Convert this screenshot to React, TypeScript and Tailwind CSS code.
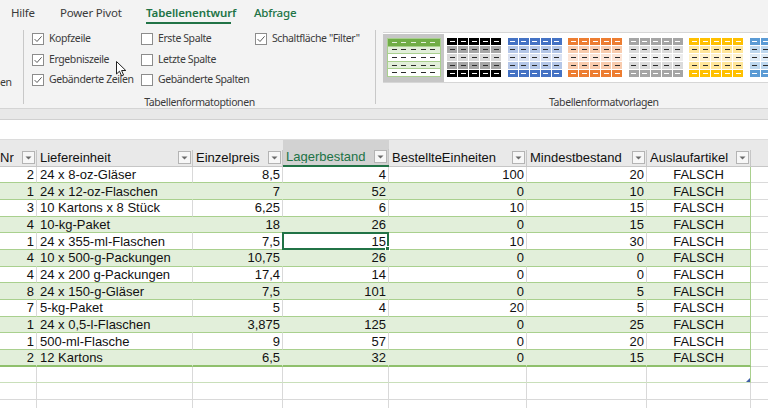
import React from 'react';

type Row = [string, string, string, string, string, string];
const rows: Row[] = [
  ['2', '24 x 8-oz-Gläser', '8,5', '4', '100', '20'],
  ['1', '24 x 12-oz-Flaschen', '7', '52', '0', '10'],
  ['3', '10 Kartons x 8 Stück', '6,25', '6', '10', '15'],
  ['4', '10-kg-Paket', '18', '26', '0', '15'],
  ['1', '24 x 355-ml-Flaschen', '7,5', '15', '10', '30'],
  ['4', '10 x 500-g-Packungen', '10,75', '26', '0', '0'],
  ['4', '24 x 200 g-Packungen', '17,4', '14', '0', '0'],
  ['8', '24 x 150-g-Gläser', '7,5', '101', '0', '5'],
  ['7', '5-kg-Paket', '5', '4', '20', '5'],
  ['1', '24 x 0,5-l-Flaschen', '3,875', '125', '0', '25'],
  ['1', '500-ml-Flasche', '9', '57', '0', '20'],
  ['2', '12 Kartons', '6,5', '32', '0', '15'],
];

const GRID = 'grid grid-cols-[37px_156px_90px_106px_138px_120px_104px_17px]';

function Check({ checked }: { checked: boolean }) {
  return (
    <div className="w-[12px] h-[12px] border border-[#8c8c8c] bg-white flex items-center justify-center shrink-0">
      {checked && (
        <svg width="10" height="10" viewBox="0 0 10 10">
          <path d="M1.6 5.1 L4 7.5 L8.6 2.3" fill="none" stroke="#5a5a5a" strokeWidth="1" />
        </svg>
      )}
    </div>
  );
}

function CheckItem({ checked, label }: { checked: boolean; label: string }) {
  return (
    <div className="h-[20.5px] flex items-center gap-[5px]">
      <Check checked={checked} />
      <span className="whitespace-nowrap">{label}</span>
    </div>
  );
}

type SW = { dark: string; mid: string; light: string };
const swatches: SW[] = [
  { dark: 'bg-[#000000]', mid: 'bg-[#a6a6a6]', light: 'bg-[#d9d9d9]' },
  { dark: 'bg-[#4472c4]', mid: 'bg-[#b4c6e7]', light: 'bg-[#d9e1f2]' },
  { dark: 'bg-[#ed7d31]', mid: 'bg-[#f8cbad]', light: 'bg-[#fce4d6]' },
  { dark: 'bg-[#a5a5a5]', mid: 'bg-[#dbdbdb]', light: 'bg-[#ededed]' },
  { dark: 'bg-[#ffc000]', mid: 'bg-[#ffe699]', light: 'bg-[#fff2cc]' },
  { dark: 'bg-[#5b9bd5]', mid: 'bg-[#bdd7ee]', light: 'bg-[#ddebf7]' },
];

function Swatch({ c }: { c: SW }) {
  const rc = [c.dark, c.mid, c.light, c.mid, c.dark];
  return (
    <div className="flex flex-col gap-px w-[54px] shrink-0">
      {rc.map((bg, ri) => (
        <div key={ri} className="flex gap-px">
          {[0, 1, 2, 3, 4].map((ci) => (
            <div key={ci} className={`w-[10px] h-[7px] flex items-center justify-center ${bg}`}>
              <div className={ri === 0 || ri === 4 ? 'w-[5px] h-px bg-white' : 'w-[5px] h-px bg-[#2a2a2a]'} />
            </div>
          ))}
        </div>
      ))}
    </div>
  );
}

function GreenSwatch() {
  const rc = ['bg-[#70ad47]', 'bg-[#e2efda]', 'bg-white', 'bg-[#e2efda]', 'bg-white'];
  return (
    <div className="flex flex-col gap-px p-px bg-[#a9d08e] w-[54px] shrink-0">
      {rc.map((bg, ri) => (
        <div key={ri} className={`h-[6.6px] flex items-center justify-around px-[2px] ${bg}`}>
          {[0, 1, 2, 3, 4].map((ci) => (
            <div key={ci} className={ri === 0 ? 'w-[5px] h-px bg-[#e2efda]' : 'w-[5px] h-px bg-[#2a2a2a]'} />
          ))}
        </div>
      ))}
    </div>
  );
}

function FilterBtn() {
  return (
    <div className="w-[13px] h-[13px] border border-[#b4b4b4] bg-[#f7f7f7] flex items-center justify-center shrink-0">
      <svg width="7" height="4" viewBox="0 0 7 4">
        <path d="M0.5 0.5 L6.5 0.5 L3.5 3.5 Z" fill="#6a6a6a" />
      </svg>
    </div>
  );
}

function HeaderCell({ label, sel, first }: { label: string; sel?: boolean; first?: boolean }) {
  return (
    <div className={sel ? 'flex flex-col justify-end bg-[#d2d2d2] border-b-2 border-b-[#217346] text-[#217346]' : 'flex flex-col justify-end border-b border-b-[#c6c6c6]'}>
      <div
        className={
          first
            ? 'h-[16px] flex items-center justify-between pr-[1px] border-r border-r-[#c6c6c6]'
            : 'h-[16px] flex items-center justify-between pl-[3px] pr-[1px] border-r border-r-[#c6c6c6]'
        }
      >
        <span className="whitespace-nowrap overflow-hidden">{label}</span>
        <FilterBtn />
      </div>
    </div>
  );
}

function DataRow({ r, i }: { r: Row; i: number }) {
  const green = i % 2 === 1;
  const lastRow = i === rows.length - 1;
  const base = green
    ? 'bg-[#e2efda] border-r border-r-[#e2efda]'
    : 'bg-white border-r border-r-[#d9d9d9]';
  const bot = lastRow ? 'border-b-2 border-b-[#8fc06c]' : 'border-b border-b-[#a9d08e]';
  return (
    <div className={`${GRID} h-[16.67px]`}>
      <div className={`${base} ${bot} flex items-center justify-end pr-[2px]`}>{r[0]}</div>
      <div className={`${base} ${bot} flex items-center pl-[3px] whitespace-nowrap`}>{r[1]}</div>
      <div className={`${base} ${bot} flex items-center justify-end pr-[2px]`}>{r[2]}</div>
      <div className={`${base} ${bot} relative flex items-center justify-end pr-[2px]`}>
        {r[3]}
        {i === 4 && (
          <div className="absolute left-[-1px] top-[-1px] right-[-1px] bottom-[-1px] border-2 border-[#217346]">
            <div className="absolute right-[-3px] bottom-[-3px] w-[5px] h-[5px] bg-[#217346] border border-white" />
          </div>
        )}
      </div>
      <div className={`${base} ${bot} flex items-center justify-end pr-[2px]`}>{r[4]}</div>
      <div className={`${base} ${bot} flex items-center justify-end pr-[2px]`}>{r[5]}</div>
      <div
        className={
          green
            ? `bg-[#e2efda] border-r border-r-[#a9d08e] ${bot} flex items-center justify-center`
            : `bg-white border-r border-r-[#a9d08e] ${bot} flex items-center justify-center`
        }
      >
        FALSCH
      </div>
      <div className="bg-white border-b border-b-[#dadada]" />
    </div>
  );
}

function EmptyRow({ total }: { total?: boolean }) {
  const c = total
    ? 'bg-white border-r border-r-[#d9d9d9] border-b border-b-[#c9dfba]'
    : 'bg-white border-r border-r-[#d9d9d9] border-b border-b-[#d9d9d9]';
  return (
    <div className={`${GRID} h-[16.67px]`}>
      <div className={c} />
      <div className={c} />
      <div className={c} />
      <div className={c} />
      <div className={c} />
      <div className={c} />
      <div
        className={
          total
            ? 'relative bg-white border-r border-r-[#a9d08e] border-b border-b-[#c9dfba]'
            : 'bg-white border-r border-r-[#d9d9d9] border-b border-b-[#d9d9d9]'
        }
      >
        {total && (
          <svg className="absolute right-[0px] bottom-[0px]" width="4" height="4" viewBox="0 0 4 4">
            <path d="M4 0 L4 4 L0 4 Z" fill="#3f5fa6" />
          </svg>
        )}
      </div>
      <div className="bg-white border-b border-b-[#d9d9d9]" />
    </div>
  );
}

export default function App() {
  return (
    <div className="relative w-[768px] h-[408px] overflow-hidden bg-white flex flex-col">
      {/* Tabs */}
      <div className="h-[26px] shrink-0 bg-[#f3f3f3] flex items-center font-['Noto_Sans'] text-[11.5px] text-[#3b3b3b] tracking-[-0.2px]">
        <div className="w-[60px] pl-[11px]">Hilfe</div>
        <div className="w-[86px]">Power Pivot</div>
        <div className="w-[108px] h-full relative flex items-center">
          <span className="font-semibold text-[#217346] tracking-[-0.1px]">Tabellenentwurf</span>
          <div className="absolute left-0 w-[85px] bottom-[2px] h-[2px] bg-[#217346]" />
        </div>
        <div className="text-[#217346] font-medium">Abfrage</div>
      </div>

      {/* Ribbon body */}
      <div className="h-[83px] shrink-0 bg-[#f3f3f3] flex border-b border-b-[#d4d4d4] font-['Noto_Sans'] text-[10.5px] text-[#3b3b3b] tracking-[-0.4px]">
        <div className="w-[23px] shrink-0 pt-[49px] overflow-hidden flex justify-start">
          <span>en</span>
        </div>
        <div className="w-px bg-[#c8c8c8] my-[4px] shrink-0" />
        <div className="w-[351px] shrink-0 flex flex-col">
          <div className="flex pt-[3px] pl-[8px]">
            <div className="w-[109px] flex flex-col">
              <CheckItem checked label="Kopfzeile" />
              <CheckItem checked label="Ergebniszeile" />
              <CheckItem checked label="Gebänderte Zeilen" />
            </div>
            <div className="w-[114px] flex flex-col">
              <CheckItem checked={false} label="Erste Spalte" />
              <CheckItem checked={false} label="Letzte Spalte" />
              <CheckItem checked={false} label="Gebänderte Spalten" />
            </div>
            <div className="flex flex-col">
              <CheckItem checked label={'Schaltfläche "Filter"'} />
            </div>
          </div>
          <div className="mt-auto mb-[1px] leading-none text-center">Tabellenformatoptionen</div>
        </div>
        <div className="w-px bg-[#c8c8c8] my-[4px] shrink-0" />
        <div className="flex-1 flex flex-col min-w-0">
          <div className="ml-[7px] mt-[6px] h-[51px] bg-white border-y border-y-[#d6d6d6] flex items-center overflow-hidden">
            <div className="h-[48px] w-[61px] shrink-0 bg-[#c6c6c6] flex items-center justify-center">
              <GreenSwatch />
            </div>
            <div className="flex gap-[6.5px] pl-[3px] items-center">
              {swatches.map((s, k) => (
                <Swatch key={k} c={s} />
              ))}
            </div>
          </div>
          <div className="mt-auto mb-[1px] leading-none pl-[173px]">Tabellenformatvorlagen</div>
        </div>
      </div>

      {/* band below ribbon */}
      <div className="h-[11px] shrink-0 bg-[#e8e8e8] border-b border-b-[#d0d0d0]" />
      <div className="h-[20px] shrink-0 bg-white border-b border-b-[#dcdcdc]" />

      {/* Grid */}
      <div className="flex flex-col font-['Liberation_Sans'] text-[13px] text-[#111] leading-none">
        <div className={`${GRID} h-[26.67px] bg-[#e9e9e9]`}>
          <HeaderCell label="Nr" first />
          <HeaderCell label="Liefereinheit" />
          <HeaderCell label="Einzelpreis" />
          <HeaderCell label="Lagerbestand" sel />
          <HeaderCell label="BestellteEinheiten" />
          <HeaderCell label="Mindestbestand" />
          <HeaderCell label="Auslaufartikel" />
          <div className="border-b border-b-[#c6c6c6]" />
        </div>
        {rows.map((r, i) => (
          <DataRow key={i} r={r} i={i} />
        ))}
        <EmptyRow total />
        <EmptyRow />
        <EmptyRow />
      </div>

      {/* mouse cursor */}
      <svg className="absolute left-[116px] top-[61px]" width="12" height="17" viewBox="0 0 12 17">
        <path d="M0.5 0.5 L0.5 13 L3.5 10.2 L5.6 15 L7.6 14.1 L5.6 9.5 L9.8 9.5 Z" fill="#ffffff" stroke="#222" strokeWidth="1" strokeLinejoin="round" />
      </svg>
    </div>
  );
}
